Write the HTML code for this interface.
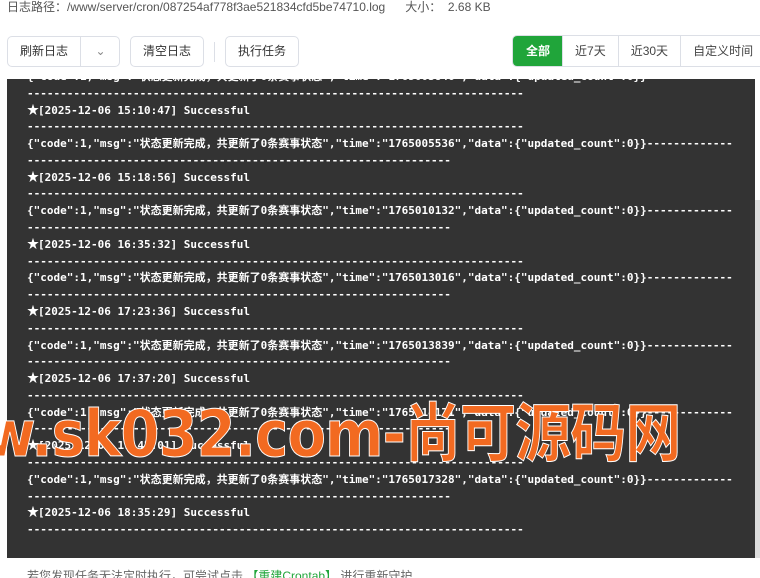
<!DOCTYPE html>
<html><head><meta charset="utf-8"><style>
*{margin:0;padding:0;box-sizing:border-box}
html,body{width:760px;height:578px;overflow:hidden}
body{background:#fff;font-family:"Liberation Sans","Noto Sans CJK SC",sans-serif;font-size:12px;color:#555;position:relative}
.top{position:absolute;left:7px;top:-2px;font-size:12px;color:#555;white-space:pre}
.btn{position:absolute;top:36px;height:31px;border:1px solid #dcdfe6;border-radius:5px;font-size:12px;color:#333;line-height:29px;text-align:center;background:#fff;white-space:nowrap}
.tabs{position:absolute;left:512px;top:35px;height:32px;display:flex;border:1px solid #dcdfe6;border-radius:5px 0 0 5px;overflow:hidden;white-space:nowrap}
.tabs div{font-size:12px;line-height:30px;padding:0 12px;border-left:1px solid #dcdfe6;color:#444;white-space:nowrap;flex:none}
.tabs div.on{background:#20a53a;color:#fff;border:none;font-weight:bold;padding:0 12px 0 13px}
.log{position:absolute;left:7px;top:79px;width:748px;height:479px;background:#333;overflow:hidden}
pre{position:absolute;left:20px;top:-10px;font-family:"DejaVu Sans Mono","Noto Sans CJK SC",monospace;font-weight:bold;font-size:11px;line-height:16.78px;color:#fff;white-space:pre}
pre b{font-family:"Noto Sans CJK SC",sans-serif;font-size:12px;line-height:10px;letter-spacing:-1px}
.sb{position:absolute;left:755px;top:200px;width:5px;height:358px;background:#ddd}
.wm{position:absolute;left:-16px;top:383px;font-family:"DejaVu Sans","Noto Sans CJK SC",sans-serif;font-size:64px;color:#f26a21;white-space:pre;letter-spacing:-1px;-webkit-text-stroke:1px #fff;font-weight:bold;transform:scaleX(0.875);transform-origin:left}
.foot{position:absolute;left:27px;top:567px;font-size:12px;color:#666;white-space:pre}
</style></head><body>
<div class="top">日志路径：/www/server/cron/087254af778f3ae521834cfd5be74710.log      大小：  2.68 KB</div>
<div class="btn" style="left:7px;width:113px;text-align:left"><span style="padding-left:12px">刷新日志</span><span style="position:absolute;left:72px;top:0;height:29px;border-left:1px solid #dcdfe6;width:40px;text-align:center;color:#888">&#8964;</span></div>
<div class="btn" style="left:130px;width:74px">清空日志</div>
<div style="position:absolute;left:214px;top:42px;height:20px;border-left:1px solid #dcdfe6"></div>
<div class="btn" style="left:225px;width:74px">执行任务</div>
<div class="tabs"><div class="on">全部</div><div>近7天</div><div>近30天</div><div>自定义时间</div></div>
<div class="log"><pre>{"code":1,"msg":"状态更新完成，共更新了0条赛事状态","time":"1765003846","data":{"updated_count":0}}
---------------------------------------------------------------------------
<b>★</b>[2025-12-06 15:10:47] Successful
---------------------------------------------------------------------------
{"code":1,"msg":"状态更新完成，共更新了0条赛事状态","time":"1765005536","data":{"updated_count":0}}-------------
----------------------------------------------------------------
<b>★</b>[2025-12-06 15:18:56] Successful
---------------------------------------------------------------------------
{"code":1,"msg":"状态更新完成，共更新了0条赛事状态","time":"1765010132","data":{"updated_count":0}}-------------
----------------------------------------------------------------
<b>★</b>[2025-12-06 16:35:32] Successful
---------------------------------------------------------------------------
{"code":1,"msg":"状态更新完成，共更新了0条赛事状态","time":"1765013016","data":{"updated_count":0}}-------------
----------------------------------------------------------------
<b>★</b>[2025-12-06 17:23:36] Successful
---------------------------------------------------------------------------
{"code":1,"msg":"状态更新完成，共更新了0条赛事状态","time":"1765013839","data":{"updated_count":0}}-------------
----------------------------------------------------------------
<b>★</b>[2025-12-06 17:37:20] Successful
---------------------------------------------------------------------------
{"code":1,"msg":"状态更新完成，共更新了0条赛事状态","time":"1765014171","data":{"updated_count":0}}-------------
----------------------------------------------------------------
<b>★</b>[2025-12-06 17:42:01] Successful
---------------------------------------------------------------------------
{"code":1,"msg":"状态更新完成，共更新了0条赛事状态","time":"1765017328","data":{"updated_count":0}}-------------
----------------------------------------------------------------
<b>★</b>[2025-12-06 18:35:29] Successful
---------------------------------------------------------------------------</pre></div>
<div class="sb"></div>
<div class="wm">w.sk032.com-尚可源码网</div>
<div class="foot">若您发现任务无法定时执行，可尝试点击 <span style="color:#20a53a">【重建Crontab】</span> 进行重新守护</div>
</body></html>
